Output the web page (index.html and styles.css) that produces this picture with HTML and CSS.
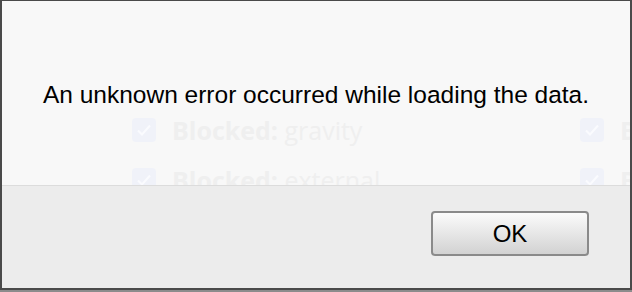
FILE: index.html
```html
<!DOCTYPE html>
<html>
<head>
<meta charset="utf-8">
<link rel="stylesheet" href="styles.css">
</head>
<body>
<div class="dialog">
  <div class="content">
    <p class="message">An unknown error occurred while loading the data.</p>
    <div class="ghost">
      <div class="ghost-item"><span class="box"><svg viewBox="0 0 24 24" width="24" height="24"><path d="M6 12.5l4 4 8-9" fill="none" stroke="#fafbfe" stroke-width="2"/></svg></span><span class="label"><b>Blocked:</b> gravity</span></div>
      <div class="ghost-item"><span class="box"><svg viewBox="0 0 24 24" width="24" height="24"><path d="M6 12.5l4 4 8-9" fill="none" stroke="#fafbfe" stroke-width="2"/></svg></span><span class="label"><b>B</b></span></div>
      <div class="ghost-item"><span class="box"><svg viewBox="0 0 24 24" width="24" height="24"><path d="M6 12.5l4 4 8-9" fill="none" stroke="#fafbfe" stroke-width="2"/></svg></span><span class="label"><b>Blocked:</b> external</span></div>
      <div class="ghost-item"><span class="box"><svg viewBox="0 0 24 24" width="24" height="24"><path d="M6 12.5l4 4 8-9" fill="none" stroke="#fafbfe" stroke-width="2"/></svg></span><span class="label"><b>B</b></span></div>
    </div>
  </div>
  <div class="footer">
    <button class="ok">OK</button>
  </div>
</div>
</body>
</html>
```
FILE: styles.css
```css
html, body {
  margin: 0;
  padding: 0;
  background: #8c8c8c;
  width: 632px;
  height: 292px;
  overflow: hidden;
}
.dialog {
  box-sizing: border-box;
  width: 632px;
  height: 290px;
  border-style: solid;
  border-color: #4a4a4a;
  border-width: 1px 2px 2px 2px;
  display: flex;
  flex-direction: column;
  background: #ececec;
}
.content {
  height: 184px;
  background: #f8f8f8;
  border-bottom: 1px solid #dcdcdc;
  overflow: hidden;
}
.message {
  margin: 0;
  padding-top: 80px;
  text-align: center;
  font-family: "Liberation Sans", Arial, sans-serif;
  font-size: 24.5px;
  line-height: 28px;
  color: #000;
  white-space: nowrap;
}
.ghost {
  display: grid;
  grid-template-columns: 448px 1fr;
  row-gap: 26px;
  padding: 9px 0 0 130px;
  font-family: "Open Sans", sans-serif;
  font-size: 25px;
  line-height: 24px;
  color: #efefef;
}
.ghost-item {
  display: flex;
  align-items: center;
  gap: 16px;
  white-space: nowrap;
}
.box {
  width: 24px;
  height: 24px;
  border-radius: 4px;
  background: #f0f2f9;
  display: block;
  flex: none;
}
.box svg { display: block; }
.label b { font-weight: 700; }
.footer {
  flex: 1;
  display: flex;
  justify-content: flex-end;
  align-items: flex-start;
  padding: 25px 41px 0 0;
}
.ok {
  box-sizing: border-box;
  width: 158px;
  height: 45px;
  border: 2px solid #8a8a8a;
  border-radius: 4px;
  background: linear-gradient(#fbfbfb, #d2d2d2);
  font-family: "Liberation Sans", Arial, sans-serif;
  font-size: 24px;
  color: #000;
  padding: 0;
}
```
